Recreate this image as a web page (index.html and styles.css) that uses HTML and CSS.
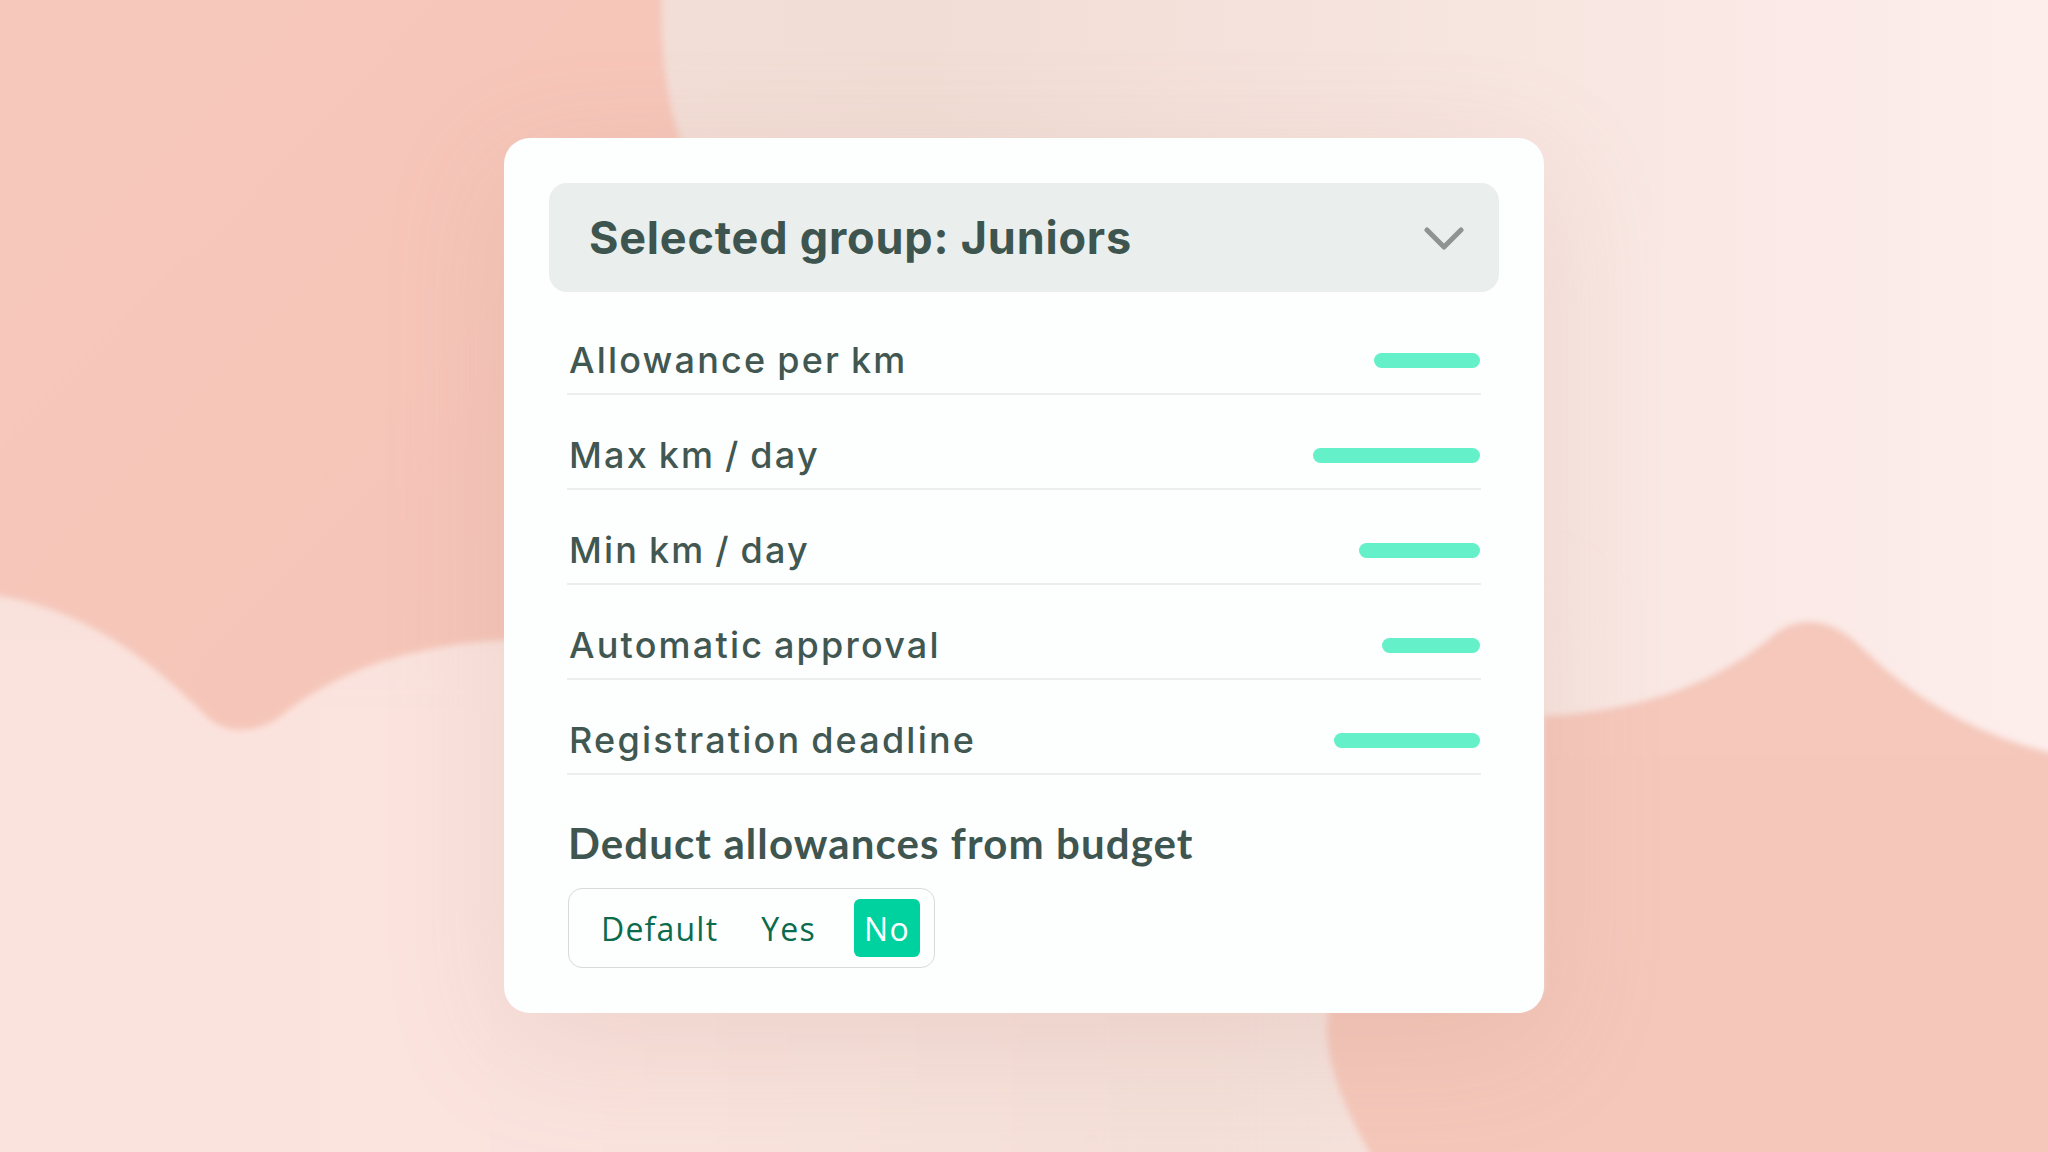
FILE: index.html
```html
<!DOCTYPE html>
<html lang="en">
<head>
<meta charset="utf-8">
<title>Group settings</title>
<link rel="stylesheet" href="styles.css">
</head>
<body>
<svg class="backdrop" width="2048" height="1152" viewBox="0 0 2048 1152" aria-hidden="true">
  <defs>
    <linearGradient id="base" x1="0" y1="0" x2="1" y2="0">
      <stop offset="0" stop-color="#f6e0d9"/>
      <stop offset="0.45" stop-color="#f1ddd5"/>
      <stop offset="0.8" stop-color="#f9e7e3"/>
      <stop offset="1" stop-color="#fdeeec"/>
    </linearGradient>
    <linearGradient id="lowband" x1="0" y1="0" x2="1" y2="0">
      <stop offset="0" stop-color="#fbe3dd"/>
      <stop offset="0.3" stop-color="#fae3de"/>
      <stop offset="0.55" stop-color="#f4e0d9"/>
      <stop offset="0.75" stop-color="#f4e0d9" stop-opacity="0"/>
      <stop offset="1" stop-color="#f4e0d9" stop-opacity="0"/>
    </linearGradient>
    <linearGradient id="salmonL" x1="0" y1="0" x2="1" y2="1">
      <stop offset="0" stop-color="#f6c7bb"/>
      <stop offset="1" stop-color="#f5c5b8"/>
    </linearGradient>
    <linearGradient id="salmonR" x1="0" y1="0" x2="0" y2="1">
      <stop offset="0" stop-color="#f5c8bb"/>
      <stop offset="1" stop-color="#f4c7ba"/>
    </linearGradient>
    <filter id="soft" x="-5%" y="-5%" width="110%" height="110%">
      <feGaussianBlur stdDeviation="3"/>
    </filter>
    <filter id="blend" x="-10%" y="-10%" width="120%" height="120%">
      <feGaussianBlur stdDeviation="40"/>
    </filter>
  </defs>
  <rect width="2048" height="1152" fill="url(#base)"/>
  <rect x="-100" y="600" width="2250" height="700" fill="url(#lowband)" filter="url(#blend)"/>
  <g filter="url(#soft)">
    <path fill="url(#salmonL)" d="M-10,-10 L662,-10 C660,60 668,110 685,150 L700,640 L503,640 C392,647 327,679 281,716 C261,731 229,738 206,716 C144,653 78,607 -10,594 Z"/>
    <path fill="url(#salmonR)" d="M1543,716 C1646,712 1724,679 1776,633 C1802,614 1835,620 1861,647 C1920,705 1985,738 2060,755 L2060,1162 L1375,1162 C1345,1110 1322,1060 1328,1013 L1330,990 L1543,990 Z"/>
  </g>
</svg>

<main class="stage">
  <section class="card">
    <div class="select">
      <span class="select-label">Selected group: Juniors</span>
      <svg class="chevron" width="40" height="24" viewBox="0 0 40 24" aria-hidden="true">
        <polyline points="3,3 20,20 37,3" fill="none" stroke="#8e9491" stroke-width="5" stroke-linecap="round" stroke-linejoin="round"/>
      </svg>
    </div>

    <ul class="rows">
      <li class="row"><span class="row-label">Allowance per km</span><span class="bar" style="width:106px"></span></li>
      <li class="row"><span class="row-label">Max km / day</span><span class="bar" style="width:167px"></span></li>
      <li class="row"><span class="row-label">Min km / day</span><span class="bar" style="width:121px"></span></li>
      <li class="row"><span class="row-label">Automatic approval</span><span class="bar" style="width:98px"></span></li>
      <li class="row"><span class="row-label">Registration deadline</span><span class="bar" style="width:146px"></span></li>
    </ul>

    <h2 class="heading">Deduct allowances from budget</h2>

    <div class="toggle">
      <span class="opt opt-default">Default</span>
      <span class="opt opt-yes">Yes</span>
      <span class="opt opt-active">No</span>
    </div>
  </section>
</main>
</body>
</html>
```

FILE: styles.css
```css
html, body {
  margin: 0;
  padding: 0;
}

body {
  width: 2048px;
  height: 1152px;
  overflow: hidden;
  position: relative;
  background: #f4e0d9;
  font-family: "Inter", "Noto Sans", sans-serif;
  color: #3f554f;
}

.backdrop {
  position: absolute;
  left: 0;
  top: 0;
  z-index: 0;
}

.stage {
  position: relative;
  z-index: 1;
  display: flex;
  justify-content: center;
  padding-top: 138px;
}

.card {
  box-sizing: border-box;
  width: 1040px;
  height: 875px;
  padding: 45px;
  background: #fdfefe;
  border-radius: 26px;
  box-shadow: 0 30px 120px rgba(190, 140, 120, 0.18);
}

.select {
  box-sizing: border-box;
  height: 109px;
  background: #eaeeed;
  border-radius: 18px;
  display: flex;
  align-items: center;
  justify-content: space-between;
  padding: 0 35px 0 40px;
}

.select-label {
  font-family: "Inter", sans-serif;
  font-weight: 700;
  font-size: 45px;
  letter-spacing: 0.8px;
  color: #3e554f;
  line-height: 1;
}

.chevron {
  display: block;
  margin-top: 2px;
}

.rows {
  list-style: none;
  margin: 8px 18px 0;
  padding: 0;
}

.row {
  display: flex;
  align-items: center;
  justify-content: space-between;
  padding: 40px 1px 13px 2px;
  border-bottom: 2px solid #eceeee;
}

.row-label {
  font-family: "Inter", sans-serif;
  font-weight: 500;
  font-size: 36px;
  line-height: 40px;
  letter-spacing: 2.2px;
  word-spacing: -2px;
  color: #415751;
}

.bar {
  display: block;
  height: 15px;
  border-radius: 8px;
  background: #64f1ca;
}

.heading {
  margin: 43px 0 0 19px;
  font-family: "Lato", sans-serif;
  font-weight: 700;
  font-size: 42px;
  line-height: 50px;
  letter-spacing: 1.1px;
  color: #3f5550;
}

.toggle {
  box-sizing: border-box;
  margin: 20px 0 0 19px;
  display: inline-flex;
  align-items: center;
  height: 80px;
  padding: 0 14px 0 32px;
  border: 1.5px solid #d8dbda;
  border-radius: 14px;
  font-family: "Open Sans", sans-serif;
  font-weight: 500;
  font-size: 32px;
  letter-spacing: 1.2px;
  color: #0b6b4c;
}

.opt-default {
  margin-right: 43px;
}

.opt-yes {
  margin-right: 38px;
}

.opt-active {
  width: 66px;
  height: 58px;
  display: flex;
  align-items: center;
  justify-content: center;
  background: #00d29f;
  color: #ffffff;
  border-radius: 6px;
}
```
